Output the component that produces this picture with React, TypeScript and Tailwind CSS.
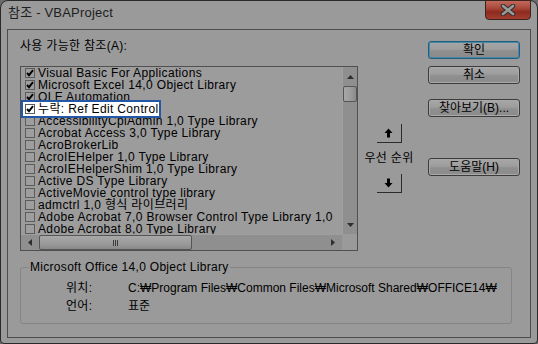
import React from 'react';

const rows: { t: string; c: boolean; sel?: boolean }[] = [
  { t: 'Visual Basic For Applications', c: true },
  { t: 'Microsoft Excel 14,0 Object Library', c: true },
  { t: 'OLE Automation', c: true },
  { t: '누락: Ref Edit Control', c: true, sel: true },
  { t: 'AccessibilityCplAdmin 1,0 Type Library', c: false },
  { t: 'Acrobat Access 3,0 Type Library', c: false },
  { t: 'AcroBrokerLib', c: false },
  { t: 'AcroIEHelper 1,0 Type Library', c: false },
  { t: 'AcroIEHelperShim 1,0 Type Library', c: false },
  { t: 'Active DS Type Library', c: false },
  { t: 'ActiveMovie control type library', c: false },
  { t: 'admctrl 1,0 형식 라이브러리', c: false },
  { t: 'Adobe Acrobat 7,0 Browser Control Type Library 1,0', c: false },
  { t: 'Adobe Acrobat 8,0 Type Library', c: false },
];

function Check({ checked, white }: { checked: boolean; white?: boolean }) {
  return (
    <div
      className={
        'w-[10px] h-[10px] shrink-0 border border-[#5c5c5c] flex items-center justify-center ' +
        (white ? 'bg-white' : 'bg-[#9e9e9e]')
      }
    >
      {checked && (
        <svg width="8" height="8" viewBox="0 0 8 8">
          <path d="M1 4 L3 6.2 L7 1.2" fill="none" stroke="#000" strokeWidth="1.9" />
        </svg>
      )}
    </div>
  );
}

function Btn({ children, def }: { children: React.ReactNode; def?: boolean }) {
  return (
    <div
      className={
        'w-[92px] h-[18px] rounded-[3px] border flex items-center justify-center text-[12px] leading-[12px] text-black bg-[linear-gradient(#a7a7a7_0%,#9d9d9d_45%,#8f8f8f_55%,#8b8b8b_100%)] ' +
        (def
          ? 'border-[#1f5f80] shadow-[inset_0_0_0_1px_#4a87a6]'
          : 'border-[#3c3c3c] shadow-[inset_0_0_0_1px_#a9a9a9]')
      }
    >
      {children}
    </div>
  );
}

function ArrowBtn({ up }: { up?: boolean }) {
  return (
    <div className="w-[25px] h-[19px] border-r border-b border-[#2c2c2c] flex items-center justify-center">
      <svg width="9" height="10" viewBox="0 0 9 10">
        {up ? (
          <path d="M4.5 0.5 L8.5 5 L6 5 L6 9.5 L3 9.5 L3 5 L0.5 5 Z" fill="#000" />
        ) : (
          <path d="M4.5 9.5 L8.5 5 L6 5 L6 0.5 L3 0.5 L3 5 L0.5 5 Z" fill="#000" />
        )}
      </svg>
    </div>
  );
}

export default function App() {
  return (
    <div className="w-[538px] h-[344px] bg-[#6a6a6a] font-['Liberation_Sans','Noto_Sans_CJK_KR',sans-serif] text-black">
      <div className="w-[538px] h-[344px] bg-[#9a9a9a] border border-[#2a2a2a] rounded-t-[8px] rounded-b-[4px] flex flex-col">
        {/* title bar */}
        <div className="h-[28px] flex items-start justify-between pl-[7px] pr-[6px]">
          <div className="mt-[5px] text-[13px] leading-[14px] text-[#1e1e1e] tracking-[0.2px]">참조 - VBAProject</div>
          <div className="-mt-[1px] w-[46px] h-[20px] rounded-b-[4px] border border-[#3c2320] bg-[linear-gradient(#c06a5c_0%,#a9483a_40%,#8e2b1f_60%,#a33d2f_100%)] flex items-center justify-center">
            <svg width="16" height="12" viewBox="0 0 16 12">
              <path d="M3 2 L13 10 M13 2 L3 10" stroke="#2f2f2f" strokeWidth="4.6" strokeLinecap="round" />
              <path d="M3 2 L13 10 M13 2 L3 10" stroke="#9a9a9a" strokeWidth="2.6" strokeLinecap="round" />
            </svg>
          </div>
        </div>
        {/* client */}
        <div className="flex-1 ml-[6px] mr-[6px] mb-[5px] border border-[#4c4c4c] flex flex-col">
          <div className="flex pl-[12px] pt-[10px]">
            {/* left */}
            <div className="w-[338px] flex flex-col">
              <div className="h-[12px] text-[12px] leading-[12px] tracking-[0.3px] whitespace-nowrap">사용 가능한 참조(A):</div>
              <div className="mt-[14px] w-[338px] h-[185px] border border-[#505050] bg-[#9c9c9c] grid grid-cols-[321px_15px] grid-rows-[167px_16px]">
                <div className="relative overflow-hidden">
                  {rows.map((r, i) => (
                    <div key={i} className="relative h-[12px] flex items-center pl-[4px] gap-[3px]">
                      <Check checked={r.c} />
                      <span className="text-[12px] leading-[12px] whitespace-nowrap tracking-[0.35px]">{r.t}</span>
                      {r.sel && (
                        <div className="absolute left-0 top-[-3px] w-[140px] h-[18px] border-2 border-[#2457a6] bg-white flex items-center pl-[2px] gap-[3px] z-10">
                          <Check checked white />
                          <span className="text-[12px] leading-[12px] whitespace-nowrap tracking-[0.35px]">{r.t}</span>
                        </div>
                      )}
                    </div>
                  ))}
                </div>
                {/* vertical scrollbar */}
                <div className="bg-[#8f8f8f] border-l border-[#9f9f9f] flex flex-col">
                  <div className="h-[19px] flex items-center justify-center">
                    <svg width="7" height="4" viewBox="0 0 7 4">
                      <path d="M0 4 L3.5 0 L7 4 Z" fill="#2e2e2e" />
                    </svg>
                  </div>
                  <div className="h-[16px] mx-[0px] rounded-[2px] border border-[#555] bg-[linear-gradient(90deg,#a8a8a8,#9a9a9a_60%,#8a8a8a)]" />
                  <div className="flex-1" />
                  <div className="h-[19px] flex items-center justify-center">
                    <svg width="7" height="4" viewBox="0 0 7 4">
                      <path d="M0 0 L3.5 4 L7 0 Z" fill="#2e2e2e" />
                    </svg>
                  </div>
                </div>
                {/* horizontal scrollbar */}
                <div className="bg-[#8f8f8f] border-t border-[#9f9f9f] flex items-stretch">
                  <div className="w-[18px] flex items-center justify-center">
                    <svg width="4" height="7" viewBox="0 0 4 7">
                      <path d="M4 0 L0 3.5 L4 7 Z" fill="#2e2e2e" />
                    </svg>
                  </div>
                  <div className="w-[153px] rounded-[2px] border border-[#555] bg-[linear-gradient(#a8a8a8,#9a9a9a_60%,#8a8a8a)] flex items-center justify-center gap-[1px]">
                    <div className="w-[1px] h-[6px] bg-[#3a3a3a]" />
                    <div className="w-[1px] h-[6px] bg-[#3a3a3a]" />
                    <div className="w-[1px] h-[6px] bg-[#3a3a3a]" />
                  </div>
                  <div className="flex-1" />
                  <div className="w-[18px] flex items-center justify-center">
                    <svg width="4" height="7" viewBox="0 0 4 7">
                      <path d="M0 0 L4 3.5 L0 7 Z" fill="#2e2e2e" />
                    </svg>
                  </div>
                </div>
                <div className="bg-[#9a9a9a]" />
              </div>
            </div>
            {/* middle */}
            <div className="w-[52px] ml-[5px] flex flex-col items-center pt-[84px]">
              <ArrowBtn up />
              <div className="mt-[9px] h-[12px] text-[12px] leading-[12px] whitespace-nowrap tracking-[0.3px]">우선 순위</div>
              <div className="mt-[10px]">
                <ArrowBtn />
              </div>
            </div>
            {/* right */}
            <div className="ml-[13px] flex flex-col pt-[1px]">
              <Btn def>확인</Btn>
              <div className="mt-[7px]">
                <Btn>취소</Btn>
              </div>
              <div className="mt-[15px]">
                <Btn>찾아보기(B)...</Btn>
              </div>
              <div className="mt-[41px]">
                <Btn>도움말(H)</Btn>
              </div>
            </div>
          </div>
          {/* group box */}
          <fieldset className="mt-[10px] ml-[12px] w-[492px] h-[63px] border border-[#858585] rounded-[3px] pl-[8px]">
            <legend className="px-[1px] text-[12px] leading-[12px] tracking-[0.3px] whitespace-nowrap">
              Microsoft Office 14,0 Object Library
            </legend>
            <div className="mt-[9px] ml-[37px] flex flex-col gap-[6px] text-[12px] leading-[12px] whitespace-nowrap">
              <div className="flex">
                <span className="w-[62px] tracking-[0.3px]">위치:</span>
                <span className="tracking-[0px]">C:₩Program Files₩Common Files₩Microsoft Shared₩OFFICE14₩</span>
              </div>
              <div className="flex">
                <span className="w-[62px] tracking-[0.3px]">언어:</span>
                <span>표준</span>
              </div>
            </div>
          </fieldset>
        </div>
      </div>
    </div>
  );
}
